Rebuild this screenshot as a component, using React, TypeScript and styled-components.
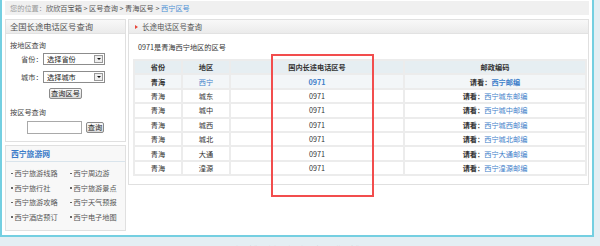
import React from "react";
import styled, { createGlobalStyle } from "styled-components";

const GlobalStyle = createGlobalStyle`
  html, body {
    margin: 0;
    padding: 0;
    background: #e4eef3;
  }
  body {
    font-family: "Noto Sans CJK SC", "Liberation Sans", sans-serif;
    font-size: 7.2px;
    color: #333;
  }
  * {
    box-sizing: border-box;
  }
`;

const Page = styled.div`
  width: 594px;
  background: #fff;
  border: 2px solid #74cfe1;
  border-top: none;
  padding: 1px 3px 4px 3px;
`;

const Crumbs = styled.div`
  height: 14px;
  line-height: 14px;
  padding-left: 5px;
  background: #f0f0f0;
  color: #555;
`;

const CrumbLabel = styled.span`
  color: #9a9a9a;
`;

const CrumbCurrent = styled.span`
  color: #4a8fd4;
`;

const Columns = styled.div`
  display: flex;
  align-items: flex-start;
  gap: 2px;
  margin-top: 4px;
`;

const Sidebar = styled.div`
  width: 121px;
  display: flex;
  flex-direction: column;
  gap: 3px;
`;

const Box = styled.div<{ $tint?: boolean }>`
  border: 1px solid #e0e0e0;
  background: ${(p) => (p.$tint ? "#f8f8f8" : "#fff")};
`;

const BoxHead = styled.div<{ $big?: boolean }>`
  height: 14px;
  line-height: 13px;
  border-bottom: 1px solid #e2e2e2;
  background: linear-gradient(#f8f8f8, #ebebeb);
  color: #555;
  font-size: ${(p) => (p.$big ? "8.3px" : "7.5px")};
  padding-left: 4px;
  display: flex;
  align-items: center;
  gap: 4px;
`;

const RedArrow = styled.span`
  width: 0;
  height: 0;
  margin-left: 2px;
  border-top: 2.5px solid transparent;
  border-bottom: 2.5px solid transparent;
  border-left: 3px solid #e8463a;
`;

const Form = styled.div`
  padding: 5px 0 7px 0;
`;

const SubTitle = styled.div<{ $gap?: number }>`
  height: 12px;
  line-height: 12px;
  padding-left: 4px;
  margin-top: ${(p) => p.$gap ?? 0}px;
  color: #444;
`;

const FieldRow = styled.div<{ $gap: number }>`
  display: flex;
  align-items: center;
  height: 12px;
  margin-top: ${(p) => p.$gap}px;
  padding-left: 15px;
`;

const FieldLabel = styled.span`
  width: 22px;
  color: #444;
`;

const FakeSelect = styled.div`
  width: 62px;
  height: 12px;
  border: 1px solid #8c8c8c;
  display: flex;
  align-items: center;
  justify-content: space-between;
  padding-left: 3px;
  color: #222;
`;

const SelectArrow = styled.span`
  width: 9px;
  height: 8px;
  margin-right: 1px;
  border: 1px solid #9a9a9a;
  background: #eee;
  display: flex;
  align-items: center;
  justify-content: center;
  &::after {
    content: "";
    border-left: 2px solid transparent;
    border-right: 2px solid transparent;
    border-top: 2px solid #111;
  }
`;

const Centered = styled.div<{ $gap: number; $h: number }>`
  display: flex;
  justify-content: center;
  align-items: center;
  gap: 4px;
  height: ${(p) => p.$h}px;
  margin-top: ${(p) => p.$gap}px;
`;

const Btn = styled.button`
  height: 11px;
  padding: 0 1px;
  border: 1px solid #8a8a8a;
  border-radius: 2px;
  background: linear-gradient(#fbfbfb, #d8d8d8);
  font-family: inherit;
  font-size: 7.2px;
  line-height: 9px;
  color: #222;
`;

const TextInput = styled.input`
  width: 55px;
  height: 13px;
  border: 1px solid #a9a9a9;
  padding: 0;
`;

const LinksHead = styled.div`
  height: 16px;
  line-height: 15px;
  padding-left: 5px;
  border-bottom: 1px solid #d9e4ec;
  color: #3b7bc8;
  font-weight: bold;
  font-size: 7.8px;
`;

const LinkGrid = styled.ul`
  list-style: none;
  margin: 0;
  padding: 4px 0 6px 5px;
  display: grid;
  grid-template-columns: 59px 59px;
`;

const LinkItem = styled.li`
  height: 14.5px;
  line-height: 14.5px;
  color: #555;
  display: flex;
  align-items: center;
  gap: 2px;
  &::before {
    content: "";
    width: 1.5px;
    height: 1.5px;
    background: #666;
  }
`;

const Main = styled.div`
  position: relative;
  flex: 1;
  border: 1px solid #e0e0e0;
  padding-bottom: 8px;
`;

const Intro = styled.div`
  height: 12px;
  line-height: 12px;
  margin: 7px 0 0 9px;
`;

const Table = styled.table`
  margin: 6px 0 0 4px;
  width: 452px;
  border-collapse: collapse;
  table-layout: fixed;
`;

const Row = styled.tr<{ $kind?: "head" | "first" }>`
  height: 14.4px;
  background: ${(p) =>
    p.$kind === "head" ? "#e6eef2" : p.$kind === "first" ? "#f3f6f8" : "#fff"};
  font-weight: ${(p) => (p.$kind ? "bold" : "normal")};
`;

const Cell = styled.td`
  border: 2px solid #ececec;
  text-align: center;
  padding: 0;
  line-height: 10px;
  color: #333;
`;

const Blue = styled.span<{ $bold?: boolean }>`
  color: #3f7fca;
  font-weight: ${(p) => (p.$bold ? "bold" : "normal")};
`;

const Strong = styled.b`
  color: #333;
`;

const Highlight = styled.div`
  position: absolute;
  left: 142px;
  top: 34px;
  width: 103px;
  height: 143px;
  border: 2px solid #f24d4d;
  pointer-events: none;
`;

const Footer = styled.div`
  width: 594px;
  margin-top: 6px;
  text-align: center;
  color: #8a8a8a;
  line-height: 12px;
`;

const districts = ["城东", "城中", "城西", "城北", "大通", "湟源"];

const links = [
  "西宁旅游线路",
  "西宁周边游",
  "西宁旅行社",
  "西宁旅游景点",
  "西宁旅游攻略",
  "西宁天气预报",
  "西宁酒店预订",
  "西宁电子地图",
];

export default function App() {
  return (
    <>
      <GlobalStyle />
      <Page>
        <Crumbs>
          <CrumbLabel>您的位置：</CrumbLabel>欣欣百宝箱 &gt; 区号查询 &gt; 青海区号 &gt;{" "}
          <CrumbCurrent>西宁区号</CrumbCurrent>
        </Crumbs>
        <Columns>
          <Sidebar>
            <Box>
              <BoxHead $big>全国长途电话区号查询</BoxHead>
              <Form>
                <SubTitle>按地区查询</SubTitle>
                <FieldRow $gap={2}>
                  <FieldLabel>省份：</FieldLabel>
                  <FakeSelect>
                    选择省份
                    <SelectArrow />
                  </FakeSelect>
                </FieldRow>
                <FieldRow $gap={6}>
                  <FieldLabel>城市：</FieldLabel>
                  <FakeSelect>
                    选择城市
                    <SelectArrow />
                  </FakeSelect>
                </FieldRow>
                <Centered $gap={5} $h={11}>
                  <Btn>查询区号</Btn>
                </Centered>
                <SubTitle $gap={7}>按区号查询</SubTitle>
                <Centered $gap={3} $h={13}>
                  <TextInput />
                  <Btn>查询</Btn>
                </Centered>
              </Form>
            </Box>
            <Box $tint>
              <LinksHead>西宁旅游网</LinksHead>
              <LinkGrid>
                {links.map((l) => (
                  <LinkItem key={l}>{l}</LinkItem>
                ))}
              </LinkGrid>
            </Box>
          </Sidebar>
          <Main>
            <BoxHead>
              <RedArrow />
              长途电话区号查询
            </BoxHead>
            <Intro>0971是青海西宁地区的区号</Intro>
            <Table>
              <colgroup>
                <col style={{ width: 48 }} />
                <col style={{ width: 48 }} />
                <col style={{ width: 174 }} />
                <col style={{ width: 182 }} />
              </colgroup>
              <tbody>
                <Row $kind="head">
                  <Cell>省份</Cell>
                  <Cell>地区</Cell>
                  <Cell>国内长途电话区号</Cell>
                  <Cell>邮政编码</Cell>
                </Row>
                <Row $kind="first">
                  <Cell>青海</Cell>
                  <Cell>
                    <Blue>西宁</Blue>
                  </Cell>
                  <Cell>
                    <Blue $bold>0971</Blue>
                  </Cell>
                  <Cell>
                    请看：<Blue $bold>西宁邮编</Blue>
                  </Cell>
                </Row>
                {districts.map((d) => (
                  <Row key={d}>
                    <Cell>青海</Cell>
                    <Cell>{d}</Cell>
                    <Cell>0971</Cell>
                    <Cell>
                      <Strong>请看：</Strong>
                      <Blue>西宁{d}邮编</Blue>
                    </Cell>
                  </Row>
                ))}
              </tbody>
            </Table>
            <Highlight />
          </Main>
        </Columns>
      </Page>
      <Footer>关于我们 | 合作伙伴 | 免责声明 | 联系我们</Footer>
    </>
  );
}
